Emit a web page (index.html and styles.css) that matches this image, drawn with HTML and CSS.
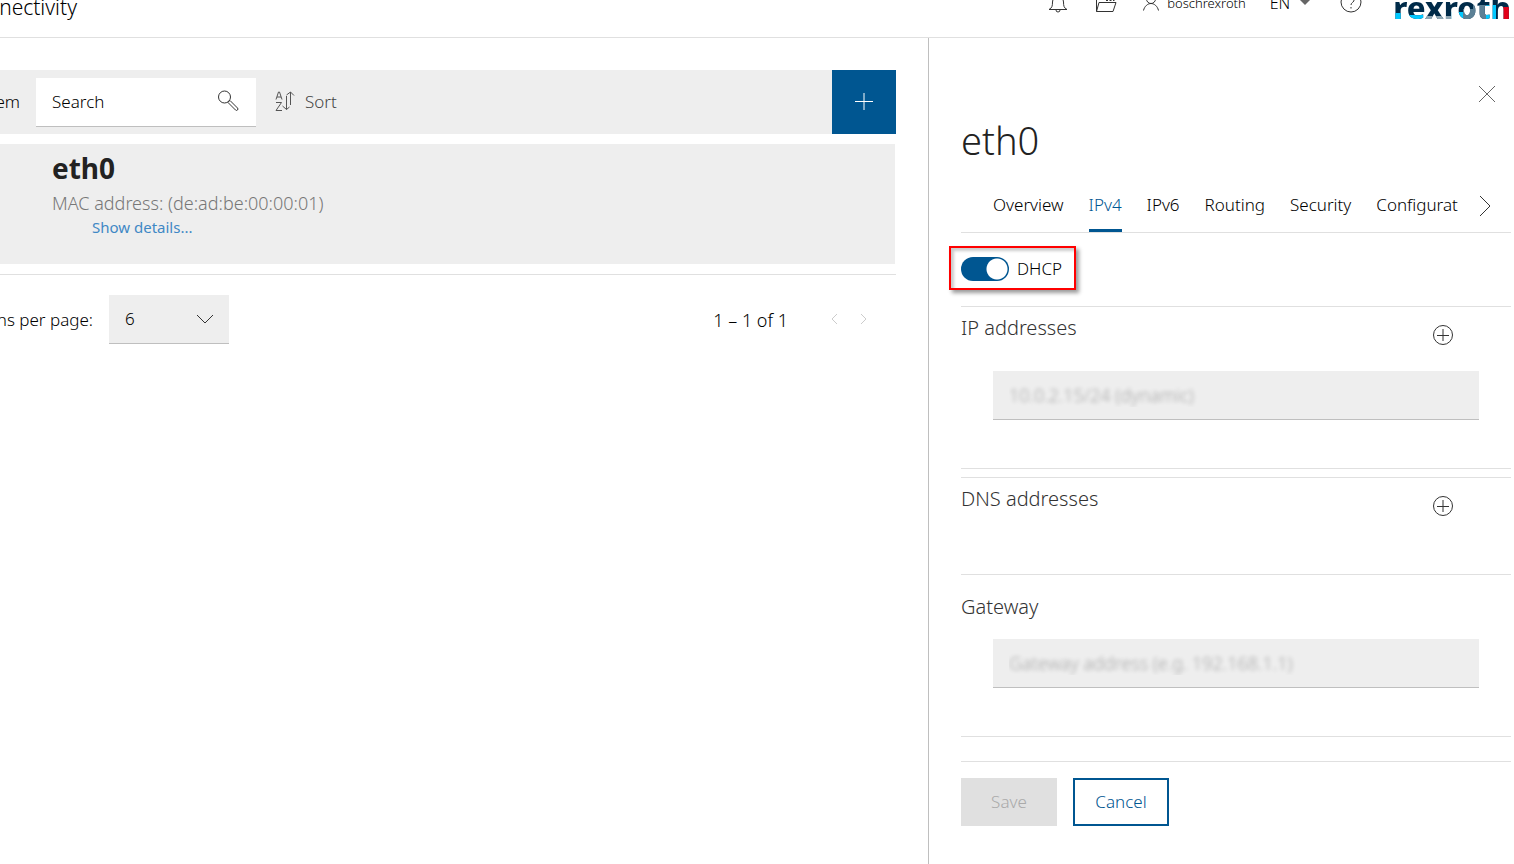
FILE: index.html
```html
<!DOCTYPE html>
<html lang="en">
<head>
    <meta charset="UTF-8">
    <meta name="viewport" content="width=device-width, initial-scale=1.0">
    <title>Network connectivity</title>
    <link rel="stylesheet" href="styles.css">
</head>
<body>

    <!-- Header -->
    <header class="header">
        <h1 class="header-title">nectivity</h1>
        <nav class="header-nav">
            <button type="button" class="icon-btn" aria-label="Notifications">
                <svg width="24" height="24" viewBox="0 0 24 24"><path d="M3 18.500H21M3 18.500C6 17 6.500 15 6.500 11a5.500 5.500 0 0 1 11 0c0 4 .5 6 3.500 7.500M10 19a2 2 0 0 0 4 0"/></svg>
            </button>
            <button type="button" class="icon-btn" aria-label="Files">
                <svg width="24" height="24" viewBox="0 0 24 24"><path d="M2.500 20.500V3.500H9L11 6.500H21.500V9M2.500 20.500L5 11.500H22L19 20.500ZM12 9.500H14M15.500 9.500H17.500M19 9.500H20.500"/></svg>
            </button>
            <button type="button" class="user-btn">
                <svg width="24" height="24" viewBox="0 0 24 24"><circle cx="12" cy="8" r="4.500"/><path d="M4.500 19.500C5.500 15 9 12.500 12 12.500S18.500 15 19.500 19.500"/></svg>
                <span>boschrexroth</span>
            </button>
            <button type="button" class="lang-btn">EN <span class="caret"></span></button>
            <button type="button" class="icon-btn help-btn" aria-label="Help">
                <svg width="24" height="24" viewBox="0 0 24 24"><circle cx="12" cy="11" r="10"/><path d="M9 9a3 3 0 1 1 4.500 2.500Q12 12.500 12 14M12 16V17.500"/></svg>
            </button>
            <a href="#" class="logo">rexroth</a>
        </nav>
    </header>

    <div class="content">
        <!-- Interface list -->
        <main class="list">
            <div class="toolbar">
                <span class="toolbar-label">em</span>
                <div class="search">
                    <input type="text" placeholder="Search" aria-label="Search">
                    <svg width="24" height="24" viewBox="0 0 24 24"><circle cx="8.500" cy="7" r="6"/><path d="M12.500 11.500L14 10.500L21.500 18A1.400 1.400 0 0 1 19.500 20L12 12.500Z"/></svg>
                </div>
                <button type="button" class="sort-btn">
                    <svg width="22" height="22" viewBox="0 0 22 22"><path d="M2 8.500L4.500 1H5.500L8 8.500M3 6H7M2 11.500H7.500L2 19.500H8M12.500 5V18.500M8.500 15L12.500 18.500L15.500 16M16.500 14V1M12.500 4L16.500 1L20 4.500"/></svg>
                    <span>Sort</span>
                </button>
                <button type="button" class="add-btn" aria-label="Add">
                    <svg width="20" height="20" viewBox="0 0 20 20"><path d="M1 9.500H19M10 1V18"/></svg>
                </button>
            </div>

            <div class="device">
                <h2>eth0</h2>
                <p>MAC address: (de:ad:be:00:00:01)</p>
                <a href="#">Show details...</a>
            </div>

            <div class="paginator">
                <label class="page-label" for="page-size">ns per page:</label>
                <div class="select">
                    <select id="page-size"><option>6</option></select>
                    <svg width="18" height="10" viewBox="0 0 18 10"><path d="M1 1L9 9L17 1"/></svg>
                </div>
                <span class="range">1 – 1 of 1</span>
                <button type="button" class="page-btn" aria-label="Previous page" disabled>
                    <svg width="8" height="12" viewBox="0 0 8 12"><path d="M7 1L2 6L7 11"/></svg>
                </button>
                <button type="button" class="page-btn" aria-label="Next page" disabled>
                    <svg width="8" height="12" viewBox="0 0 8 12"><path d="M1 1L6 6L1 11"/></svg>
                </button>
            </div>
        </main>

        <!-- Details of the selected interface -->
        <aside class="details">
            <div class="close-row">
                <button type="button" class="icon-btn" aria-label="Close">
                    <svg width="18" height="18" viewBox="0 0 18 18"><path d="M1 1L17 17M17 1L1 17"/></svg>
                </button>
            </div>
            <h2 class="details-title">eth0</h2>

            <div class="tabs">
                <div class="tab-list">
                    <a href="#">Overview</a>
                    <a href="#" class="active">IPv4</a>
                    <a href="#">IPv6</a>
                    <a href="#">Routing</a>
                    <a href="#">Security</a>
                    <a href="#">Configurat</a>
                </div>
                <button type="button" class="icon-btn" aria-label="More tabs">
                    <svg width="12" height="22" viewBox="0 0 12 22"><path d="M1 1L11 11L1 21"/></svg>
                </button>
            </div>

            <div class="switch-row">
                <label class="switch">
                    <input type="checkbox" checked>
                    <span>DHCP</span>
                </label>
            </div>

            <section class="group addresses">
                <div class="group-head">
                    <h3>IP addresses</h3>
                    <button type="button" class="icon-btn" aria-label="Add IP address">
                        <svg width="22" height="22" viewBox="0 0 22 22"><circle cx="11" cy="11" r="9.500"/><path d="M5 11.500H17M11 5V17"/></svg>
                    </button>
                </div>
                <input type="text" class="field" value="10.0.2.15/24 (dynamic)" aria-label="IP address" disabled>
            </section>

            <section class="group dns">
                <div class="group-head">
                    <h3>DNS addresses</h3>
                    <button type="button" class="icon-btn" aria-label="Add DNS address">
                        <svg width="22" height="22" viewBox="0 0 22 22"><circle cx="11" cy="11" r="9.500"/><path d="M5 11.500H17M11 5V17"/></svg>
                    </button>
                </div>
            </section>

            <section class="group gateway">
                <h3>Gateway</h3>
                <input type="text" class="field" value="Gateway address (e.g. 192.168.1.1)" aria-label="Gateway" disabled>
            </section>

            <div class="actions">
                <button type="button" class="save-btn" disabled>Save</button>
                <button type="button" class="cancel-btn">Cancel</button>
            </div>
        </aside>
    </div>

</body>
</html>
```

FILE: styles.css
```css
* {
    box-sizing: border-box;
}
body {
    margin: 0;
    height: 100vh;
    display: flex;
    flex-direction: column;
    overflow: hidden;
    font-family: "Noto Sans", "Open Sans", sans-serif;
    font-size: 17px;
    font-weight: 300;
    line-height: 24px;
    color: #000;
    background: #fff;
}
h1, h2, h3, p {
    margin: 0;
    font-weight: 300;
}
a {
    text-decoration: none;
    color: inherit;
}
button, input, select {
    font: inherit;
    color: inherit;
    border: none;
    border-radius: 0;
    background: none;
    margin: 0;
    padding: 0;
}
button {
    cursor: pointer;
}
svg {
    display: block;
    flex: none;
    fill: none;
    stroke: #333;
    stroke-width: 1;
}
/* Header */
.header {
    flex: none;
    display: flex;
    justify-content: space-between;
    align-items: center;
    height: 70px;
    margin-top: -32px;
    border-bottom: 1px solid #e0e0e0;
}
.header-title {
    font-size: 21px;
    line-height: 24px;
    width: 77px;
    padding-top: 8px;
    display: flex;
    justify-content: flex-end;
}
.header-nav {
    display: flex;
    align-items: center;
    gap: 24px;
    padding-right: 3px;
}
.user-btn {
    display: flex;
    align-items: center;
    gap: 4px;
    margin-left: -3px;
    font-size: 13px;
}
.lang-btn {
    display: flex;
    align-items: center;
    gap: 10px;
    margin-right: 5px;
    font-size: 16px;
}
.caret {
    border: 5px solid transparent;
    border-top-color: #666;
    border-bottom: none;
}
.help-btn {
    margin-right: 6px;
}
.logo {
    margin-top: 8px;
    font-size: 31px;
    font-weight: 800;
    line-height: 40px;
    color: transparent;
    background:
        linear-gradient(#e2001a, #e2001a) right bottom / 8px 20px no-repeat,
        linear-gradient(#00c8ff, #00c8ff) 93px bottom / 10px 22px no-repeat,
        linear-gradient(#5b8095, #5b8095) 80px bottom / 13px 22px no-repeat,
        linear-gradient(#5b8095, #5b8095) 70px bottom / 10px 18px no-repeat,
        linear-gradient(#00c8ff, #00c8ff) 58px bottom / 12px 15px no-repeat,
        linear-gradient(#8fa6b3, #8fa6b3) 32px bottom / 26px 11px no-repeat,
        linear-gradient(#00c8ff, #00c8ff) 12px bottom / 20px 12px no-repeat,
        linear-gradient(#00c8ff, #00c8ff) left bottom / 12px 14px no-repeat,
        #002b49;
    background-clip: text;
    -webkit-background-clip: text;
}
/* Interface list */
.content {
    flex: 1;
    display: flex;
    min-height: 0;
}
.list {
    flex: 1;
    min-width: 0;
    padding: 32px 32px 0 0;
}
.toolbar {
    display: flex;
    align-items: center;
    height: 64px;
    background: #eee;
}
.toolbar-label {
    width: 36px;
    padding-right: 16px;
    display: flex;
    justify-content: flex-end;
}
.search {
    display: flex;
    align-items: center;
    width: 220px;
    height: 49px;
    padding: 0 16px;
    background: #fff;
    border-bottom: 1px solid #bfbfbf;
}
.search input {
    flex: 1;
    min-width: 0;
    outline: none;
}
.search input::placeholder {
    color: #000;
    opacity: 1;
}
.sort-btn {
    display: flex;
    align-items: center;
    gap: 9px;
    margin-left: 18px;
    color: #444;
}
.sort-btn svg {
    stroke: #555;
}
.add-btn {
    display: flex;
    align-items: center;
    justify-content: center;
    width: 64px;
    height: 64px;
    margin-left: auto;
    background: #005691;
}
.add-btn svg {
    stroke: #fff;
}
.device {
    height: 120px;
    margin: 10px 1px 10px 0;
    padding: 8px 52px;
    background: #eee;
}
.device h2 {
    font-size: 28px;
    line-height: 32px;
    font-weight: 700;
    color: #222;
}
.device p {
    padding-top: 7px;
    font-size: 18px;
    color: #777;
}
.device a {
    display: inline-block;
    margin-left: 40px;
    font-size: 15px;
    font-weight: 400;
    line-height: 24px;
    color: #3f88c5;
}
.paginator {
    display: flex;
    align-items: center;
    padding-top: 20px;
    border-top: 1px solid #e0e0e0;
}
.page-label {
    display: flex;
    justify-content: flex-end;
    width: 93px;
    margin-right: 16px;
    white-space: nowrap;
}
.select {
    display: grid;
    align-items: center;
    width: 120px;
    height: 49px;
    background: #eee;
    border-bottom: 1px solid #bfbfbf;
}
.select select {
    grid-area: 1 / 1;
    height: 48px;
    padding: 0 16px;
    appearance: none;
}
.select svg {
    grid-area: 1 / 1;
    justify-self: end;
    margin-right: 15px;
    pointer-events: none;
}
.range {
    margin-left: auto;
    margin-right: 36px;
    font-size: 18px;
}
.page-btn {
    display: flex;
    justify-content: center;
    width: 20px;
    margin-right: 10px;
    padding-bottom: 2px;
}
.page-btn:last-child {
    margin-right: 22px;
}
.page-btn svg {
    stroke: #ccc;
}
/* Details */
.details {
    flex: none;
    width: 586px;
    padding: 32px 3px 0 32px;
    border-left: 1px solid #bfbfbf;
}
.close-row {
    display: flex;
    justify-content: flex-end;
    padding: 15px 15px 0 0;
}
.close-row svg {
    stroke: #666;
}
.details-title {
    padding: 13px 0 27px;
    font-size: 38px;
    line-height: 48px;
    color: #222;
}
.tabs {
    display: flex;
    align-items: flex-start;
    height: 42px;
    padding-left: 32px;
    border-bottom: 1px solid #e0e0e0;
}
.tab-list {
    flex: 1;
    display: flex;
    gap: 25px;
    overflow: hidden;
}
.tab-list a {
    height: 41px;
    line-height: 28px;
}
.tab-list .active {
    color: #005691;
    border-bottom: 3px solid #005691;
}
.tabs .icon-btn {
    padding: 4px 20px 0 20px;
}
.switch-row {
    height: 73px;
    padding-top: 13px;
}
.switch {
    display: inline-flex;
    align-items: center;
    gap: 8px;
    height: 44px;
    margin-left: -12px;
    padding: 2px 12px 0 10px;
    border: 2px solid #f00;
    box-shadow: 3px 3px 4px rgba(0, 0, 0, 0.4), inset 3px 3px 3px rgba(0, 0, 0, 0.2);
}
.switch input {
    appearance: none;
    width: 48px;
    height: 24px;
    border-radius: 12px;
    background: radial-gradient(circle at 36px 12px, #fff 10px, #005691 11px);
}
.group {
    border-top: 1px solid #e0e0e0;
}
.group h3 {
    font-size: 20px;
    line-height: 24px;
    color: #333;
}
.group-head {
    display: flex;
    justify-content: space-between;
    padding: 9px 57px 0 0;
}
.group-head .icon-btn {
    padding-top: 8px;
}
.field {
    display: block;
    width: calc(100% - 64px);
    height: 49px;
    margin: 0 32px;
    padding: 0 16px;
    font-size: 18px;
    background: #eee;
    border-bottom: 1px solid #bfbfbf;
    color: transparent;
    text-shadow: 0 0 4px rgba(0, 0, 0, 0.3);
}
.addresses {
    height: 163px;
    margin-bottom: 8px;
    border-bottom: 1px solid #e0e0e0;
}
.addresses .field {
    margin-top: 25px;
}
.dns {
    height: 97px;
}
.gateway {
    height: 163px;
    margin-bottom: 24px;
    padding-top: 20px;
    border-bottom: 1px solid #e0e0e0;
}
.gateway .field {
    margin-top: 20px;
}
.actions {
    display: flex;
    gap: 16px;
    padding-top: 16px;
    border-top: 1px solid #e0e0e0;
}
.actions button {
    width: 96px;
    height: 48px;
}
.save-btn {
    background: #e0e0e0;
    color: #aaa;
}
.cancel-btn {
    border: 2px solid #005691;
    color: #005691;
}
```
